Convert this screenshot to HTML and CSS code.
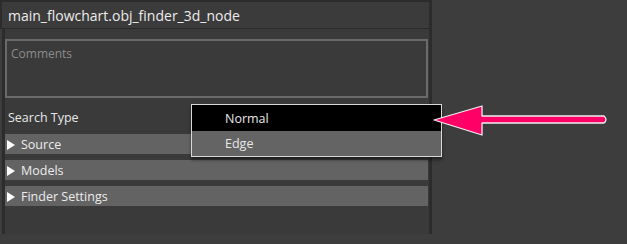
FILE: index.html
```html
<!DOCTYPE html>
<html>
<head>
<meta charset="utf-8">
<link rel="stylesheet" href="styles.css">
</head>
<body>
<div class="screen">
  <div class="panel">
    <div class="titlebar">main_flowchart.obj_finder_3d_node</div>
    <div class="content">
      <div class="comments">Comments</div>
      <div class="field-row">Search Type</div>
      <div class="sections">
        <div class="section"><span class="tri"></span>Source</div>
        <div class="section"><span class="tri"></span>Models</div>
        <div class="section"><span class="tri"></span>Finder Settings</div>
      </div>
    </div>
  </div>
  <div class="dropdown">
    <div class="option selected">Normal</div>
    <div class="option">Edge</div>
  </div>
  <svg class="arrow" width="190" height="40" viewBox="425 100 190 40">
    <path d="M434 120 L482 106 L482 116 L604 116 Q608 119.5 604 123 L482 123 L482 135 Z" fill="#ff0066" stroke="#f0f0f0" stroke-width="1.3" stroke-linejoin="round"/>
  </svg>
</div>
</body>
</html>
```
FILE: styles.css
```css
html, body {
  margin: 0;
  padding: 0;
  background: #3d3d3d;
  width: 627px;
  height: 244px;
  overflow: hidden;
}
.screen {
  position: relative;
  width: 627px;
  height: 244px;
  font-family: "Open Sans", "Noto Sans", sans-serif;
  color: #e6e6e6;
}
.panel {
  width: 432px;
  height: 234px;
  display: flex;
  flex-direction: column;
}
.titlebar {
  height: 26px;
  border-top: 2px solid #2c2c2c;
  border-left: 2px solid #2c2c2c;
  border-right: 3px solid #2c2c2c;
  border-bottom: 1px solid #2a2a2a;
  background: #3b3b3b;
  box-sizing: content-box;
  padding-left: 6px;
  font-size: 14px;
  line-height: 27px;
  color: #ececec;
  white-space: nowrap;
}
.content {
  flex: 1;
  margin-left: 2px;
  border-left: 3px solid #2c2c2c;
  border-right: 3px solid #2c2c2c;
  background: #3a3a3a;
  padding-top: 10px;
  padding-right: 1px;
  display: flex;
  flex-direction: column;
}
.comments {
  height: 45px;
  border: 2px solid #6a6a6a;
  padding: 6px 4px 4px;
  font-size: 12px;
  line-height: 14px;
  color: #8c8c8c;
}
.field-row {
  height: 20px;
  margin-top: 10px;
  margin-bottom: 6px;
  padding-left: 3px;
  font-size: 12.5px;
  line-height: 20px;
  color: #e8e8e8;
}
.sections {
  display: flex;
  flex-direction: column;
  gap: 6px;
}
.section {
  height: 20px;
  box-sizing: border-box;
  padding-top: 1px;
  background: #636363;
  display: flex;
  align-items: center;
  font-size: 12.5px;
  color: #ececec;
}
.tri {
  width: 0;
  height: 0;
  border-top: 5px solid transparent;
  border-bottom: 5px solid transparent;
  border-left: 8px solid #ffffff;
  margin-left: 2px;
  margin-right: 6px;
}
.dropdown {
  position: absolute;
  left: 191px;
  top: 104px;
  width: 249px;
  border: 1px solid #d8d8d8;
  background: #646464;
  box-shadow: 0 3px 3px rgba(0, 0, 0, 0.45);
}
.option {
  height: 26px;
  box-sizing: border-box;
  padding-top: 1px;
  line-height: 26px;
  padding-left: 33px;
  font-size: 12.5px;
  color: #e8e8e8;
}
.option.selected {
  background: #000000;
}
.option + .option {
  height: 25px;
  line-height: 24px;
}
.arrow {
  position: absolute;
  left: 425px;
  top: 100px;
}
```
